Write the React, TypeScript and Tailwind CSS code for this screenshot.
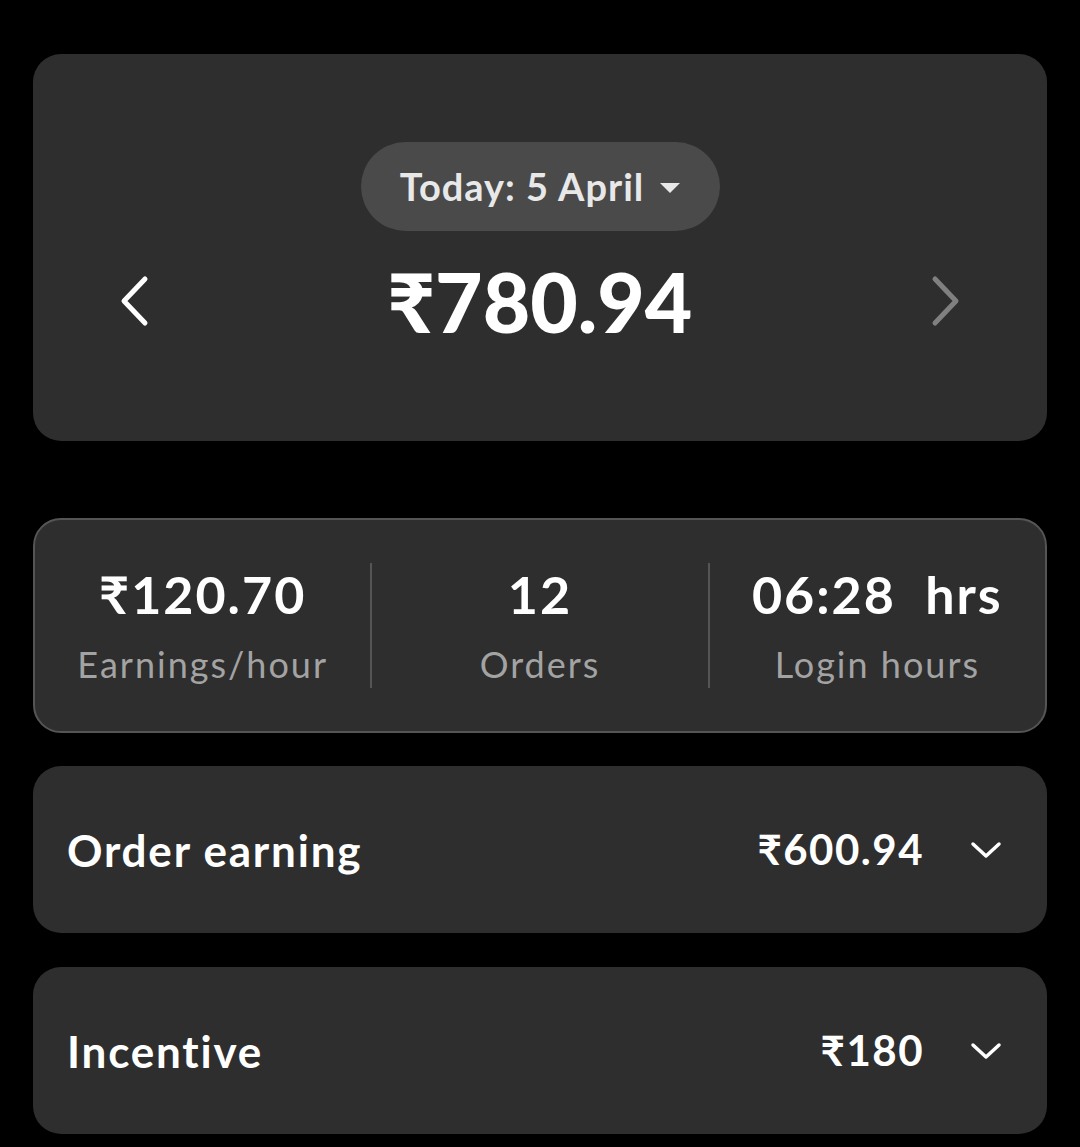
import React from "react";

const font = { fontFamily: "Lato, 'Noto Sans', sans-serif" };

function ChevronLeft({ className }: { className?: string }) {
  return (
    <svg viewBox="0 0 32 52" className={className} fill="none" stroke="currentColor" strokeWidth={5} strokeLinecap="round" strokeLinejoin="round">
      <path d="M27 4 L6 26 L27 48" />
    </svg>
  );
}

function ChevronRight({ className }: { className?: string }) {
  return (
    <svg viewBox="0 0 32 52" className={className} fill="none" stroke="currentColor" strokeWidth={5} strokeLinecap="round" strokeLinejoin="round">
      <path d="M5 4 L26 26 L5 48" />
    </svg>
  );
}

function ChevronDown() {
  return (
    <svg viewBox="0 0 32 20" className="w-[32px] h-[20px] text-white" fill="none" stroke="currentColor" strokeWidth={3.5} strokeLinecap="round" strokeLinejoin="round">
      <path d="M3 4 L16 16 L29 4" />
    </svg>
  );
}

function Stat({ value, label }: { value: string; label: string }) {
  return (
    <div className="flex-1 flex flex-col items-center">
      <div className="text-[52px] leading-[56px] font-bold tracking-[2px] text-white whitespace-pre">{value}</div>
      <div className="mt-[20px] text-[36px] leading-[44px] tracking-[2px] text-[#a3a3a3]">{label}</div>
    </div>
  );
}

function Row({ title, amount }: { title: string; amount: string }) {
  return (
    <div className="h-[167px] rounded-[28px] bg-[#2e2e2e] flex items-center pl-[34px] pr-[45px]">
      <div className="flex-1 text-[44px] font-bold tracking-[1.8px] text-white">{title}</div>
      <div className="text-[42px] font-bold tracking-[1.5px] text-white mr-[46px]">{amount}</div>
      <ChevronDown />
    </div>
  );
}

export default function App() {
  return (
    <div className="min-h-screen bg-black px-[33px] pt-[54px] pb-[14px]" style={font}>
      <div className="h-[387px] rounded-[28px] bg-[#2e2e2e] flex flex-col items-center pt-[88px]">
        <button className="h-[89px] w-[359px] rounded-full bg-[#4a4a4a] flex items-center justify-center gap-[16px] text-[38px] font-bold tracking-[1px] text-[#e8e8e8]">
          <span>Today: 5 April</span>
          <span className="w-0 h-0 border-l-[10px] border-r-[10px] border-t-[10px] border-l-transparent border-r-transparent border-t-[#e8e8e8] mt-[2px]" />
        </button>
        <div className="w-full flex items-center justify-between px-[85px] mt-[20px]">
          <ChevronLeft className="w-[32px] h-[52px] text-white" />
          <div className="text-[82px] leading-[100px] font-black text-white">₹780.94</div>
          <ChevronRight className="w-[32px] h-[52px] text-[#808080]" />
        </div>
      </div>

      <div className="mt-[77px] h-[215px] rounded-[28px] bg-[#2e2e2e] border-2 border-[#555555] flex items-center">
        <Stat value="₹120.70" label="Earnings/hour" />
        <div className="w-[2px] h-[125px] bg-[#555555]" />
        <Stat value="12" label="Orders" />
        <div className="w-[2px] h-[125px] bg-[#555555]" />
        <Stat value="06:28  hrs" label="Login hours" />
      </div>

      <div className="mt-[33px] flex flex-col gap-[34px]">
        <Row title="Order earning" amount="₹600.94" />
        <Row title="Incentive" amount="₹180" />
      </div>
    </div>
  );
}
